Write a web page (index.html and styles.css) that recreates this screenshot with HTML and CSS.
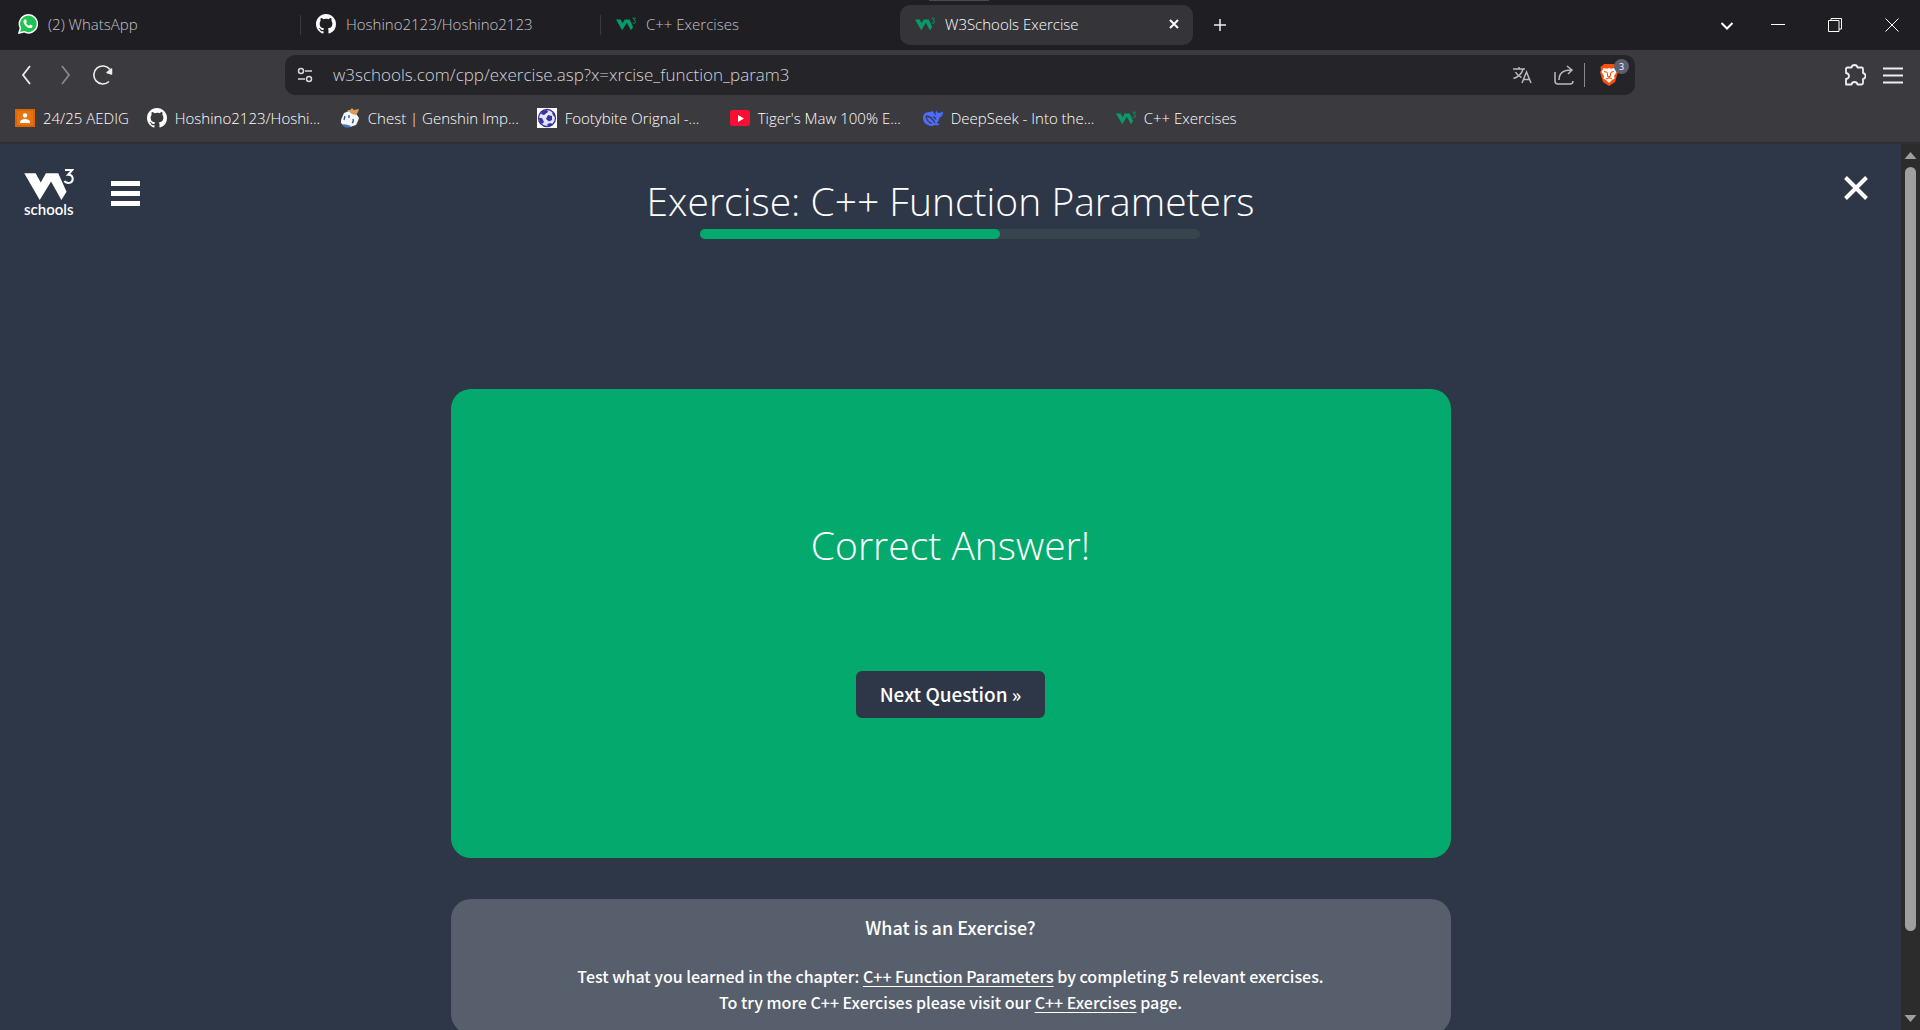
FILE: index.html
```html
<!DOCTYPE html>
<html lang="en">
<head>
<meta charset="utf-8">
<title>W3Schools Exercise</title>
<link rel="stylesheet" href="styles.css">
</head>
<body>
<svg class="defs" aria-hidden="true">
  <symbol id="github" viewBox="0 0 16 16"><path d="M8 0C3.58 0 0 3.58 0 8c0 3.54 2.29 6.53 5.47 7.59.4.07.55-.17.55-.38 0-.19-.01-.82-.01-1.49-2.01.37-2.53-.49-2.69-.94-.09-.23-.48-.94-.82-1.13-.28-.15-.68-.52-.01-.53.63-.01 1.08.58 1.23.82.72 1.21 1.87.87 2.33.66.07-.52.28-.87.51-1.07-1.78-.2-3.64-.89-3.64-3.95 0-.87.31-1.59.82-2.15-.08-.2-.36-1.02.08-2.12 0 0 .67-.21 2.2.82A7.4 7.4 0 0 1 8 3.86c.68 0 1.36.09 2 .27 1.53-1.04 2.2-.82 2.2-.82.44 1.1.16 1.92.08 2.12.51.56.82 1.27.82 2.15 0 3.07-1.87 3.75-3.65 3.95.29.25.54.73.54 1.48 0 1.07-.01 1.93-.01 2.2 0 .21.15.46.55.38A8 8 0 0 0 16 8c0-4.42-3.58-8-8-8z" fill="#fff"/></symbol>
  <symbol id="w3" viewBox="0 0 48 32"><path d="M0 5h11l5 9 5-9h12l8 18-5 8-10-18-11 18z" fill="currentColor"/><path d="M39.500 2h7l-4 4.500q4.500 0 4.500 4t-4 4q-3 0-4-2" fill="none" stroke="currentColor" stroke-width="2"/></symbol>
</svg>
<div class="window">
  <header class="browser">
    <div class="tabs">
      <div class="tab">
        <svg class="fav" viewBox="0 0 20 20"><path d="M1 19l1.400-5A9 9 0 1 1 6 17.700z" fill="#1fc351" stroke="#fff" stroke-width="1.500"/><path d="M6.500 5.500l1.400-.2 1 2.500-.8 1.100c.8 1.400 1.700 2.200 3.100 2.800l1.100-1.200 2.400 1.200c-.2 1.700-1.300 2.500-2.700 2.400-3-.5-6-3.500-6.500-6.200-.1-1 .3-1.900 1-2.400z" fill="#fff"/></svg>
        <span>(2) WhatsApp</span></div>
      <div class="tab split"><svg class="fav"><use href="#github"/></svg><span>Hoshino2123/Hoshino2123</span></div>
      <div class="tab split"><svg class="fav green"><use href="#w3"/></svg><span>C++ Exercises</span></div>
      <div class="tab active"><svg class="fav green"><use href="#w3"/></svg><span>W3Schools Exercise</span>
        <button class="tab-close" aria-label="Close tab"><svg viewBox="0 0 10 10"><path d="M1 1l8 8M9 1l-8 8" stroke="#fff" stroke-width="2"/></svg></button></div>
      <button class="new-tab" aria-label="New tab"><svg viewBox="0 0 14 14"><path d="M7 1v12M1 7h12" stroke="#eee" stroke-width="1.500"/></svg></button>
      <div class="win-buttons">
        <button class="search-tabs" aria-label="Search tabs"><svg viewBox="0 0 14 14"><path d="M1.500 5L7 10.500 12.500 5" fill="none" stroke="#fff" stroke-width="2"/></svg></button>
        <button aria-label="Minimize"><svg viewBox="0 0 14 14"><path d="M0 6.500h14" stroke="#fff"/></svg></button>
        <button aria-label="Restore"><svg viewBox="0 0 14 14"><path d="M.5 2.500h10.500v11H.5zM3 2.500v-2h10.500v10.500H11" fill="none" stroke="#fff"/></svg></button>
        <button aria-label="Close"><svg viewBox="0 0 14 14"><path d="M.5.500l13 13M13.500.500l-13 13" stroke="#fff"/></svg></button>
      </div>
    </div>
    <div class="toolbar">
      <div class="nav">
        <button aria-label="Back"><svg viewBox="0 0 20 20"><path d="M13 1L6 10l7 9" fill="none" stroke="#eee" stroke-width="1.800"/></svg></button>
        <button aria-label="Forward"><svg viewBox="0 0 20 20"><path d="M7 1l7 9-7 9" fill="none" stroke="#88878c" stroke-width="1.800"/></svg></button>
        <button aria-label="Reload"><svg viewBox="0 0 20 20"><path d="M16 16.500a9 9 0 1 1 1-12" fill="none" stroke="#eee" stroke-width="1.600"/><path d="M14 7.500l4.500-3.500v5z" fill="#eee" stroke="#eee" stroke-linejoin="round" stroke-width="1.500"/></svg></button>
      </div>
      <div class="address">
        <svg class="site" viewBox="0 0 16 16" fill="none" stroke="#d8d8dc" stroke-width="1.500"><circle cx="4" cy="4" r="2.500"/><path d="M8 4h7M1 12h7"/><circle cx="12" cy="12" r="2.500"/></svg>
        <input class="url" type="text" aria-label="Address" value="w3schools.com/cpp/exercise.asp?x=xrcise_function_param3">
        <button class="translate" aria-label="Translate"><svg viewBox="0 0 20 20" fill="none" stroke="#b9b9be" stroke-width="1.500"><path d="M1 4h12M7 2v2M11 4C10 8 6 12 1.500 13.500M3.500 7c1.500 3 4 4.500 6 5.500M10 18l4.500-11L19 18M11.500 14.500h6"/></svg></button>
        <button aria-label="Share"><svg viewBox="0 0 20 20" fill="none" stroke="#b9b9be" stroke-width="1.500"><path d="M1 7v9q0 3 3 3h12q3 0 3-3M5 15c0-6 4-10 12-10M13 1l5 4-4 4"/></svg></button>
        <button class="shield" aria-label="Brave Shields"><svg viewBox="0 0 20 24"><path d="M5 1h10l2 2 1.500.5L18 7l1 2-3 10-6 4-6-4L1 9l1-2-.5-3.500L3 3z" fill="#fb4f0c"/><path d="M4.500 5l3.500.7L10 5l2 .7 3.500-.7 2 4-2.500 4 .7 2.500L13 17l-3 3-3-3-2.700-1.500L5 13 2.500 9z" fill="#fff"/><path d="M5 8.500l3 .7M15 8.500l-3 .7M8.500 9.500v3.500l1.500 1 1.500-1V9.500M7 16l3-1.200 3 1.200" fill="none" stroke="#fb4f0c" stroke-width="1.100"/></svg><span class="badge">3</span></button>
      </div>
      <div class="tools">
        <button aria-label="Extensions"><svg viewBox="0 0 22 22"><path d="M3.500 3.500h4Q8 1 10.500 1t3 2.500h4q1.500 0 1.500 1.500v4q2.500.5 2.500 3T19 15v4q0 1.500-1.500 1.500h-4Q13 18 10.500 18T7.500 20.500H2V15q3-.5 3-3T2 9V5q0-1.500 1.500-1.500z" fill="none" stroke="#eee" stroke-width="1.800" stroke-linejoin="round"/></svg></button>
        <button aria-label="Menu"><svg viewBox="0 0 22 22"><path d="M1 4.500h20M1 11.500h20M1 18.500h20" stroke="#eee" stroke-width="1.800"/></svg></button>
      </div>
    </div>
    <nav class="bookmarks">
      <a href="#"><svg viewBox="0 0 20 20"><path d="M0 1h20v18H0z" fill="#d96604"/><path d="M2 3h16v14H2z" fill="#e67410"/><circle cx="10" cy="7.500" r="2.200" fill="#fff"/><path d="M5 15v-1.500q1-2.500 5-2.500t5 2.500V15z" fill="#fff"/></svg>24/25 AEDIG</a>
      <a class="long" href="#"><svg><use href="#github"/></svg>Hoshino2123/Hoshi...</a>
      <a class="long" href="#"><svg viewBox="0 0 20 20"><path d="M1 12l3-7 5-2 6 1 4 6-1 3-2 4-6 2-6-1-3-3z" fill="#f4f6fa"/><path d="M7 2l3 0 2-2 2 2 5-1-1 3-2 3-4-1z" fill="#d99a5a"/><path d="M3 16l5 1 3 1-3 2-4-1z" fill="#3f75b8"/><path d="M5 8l-1 4M9 7v3M13 11q1 3-1 4" stroke="#33507e" stroke-width="1.300" fill="none"/></svg>Chest | Genshin Imp...</a>
      <a class="long" href="#"><svg viewBox="0 0 20 20"><path d="M0 0h20v20H0z" fill="#fff"/><circle cx="10" cy="10" r="8.500" fill="#e4e4f8" stroke="#3533a0" stroke-width="1.300"/><path d="M11 7l4 1 0 4-3 1.500-3-2.500zM5 3l5-1 1 2-4 3-3-1zM2 10l3 0 2 4-2 2-2-2zM17 4l1.500 5-2-1-1.500-3zM10 16l4-1 2 2-4 2z" fill="#3533a0"/></svg>Footybite Orignal -...</a>
      <a class="long" href="#"><svg viewBox="0 0 20 20"><rect y="2" width="20" height="16" rx="3" fill="#fc0d34"/><path d="M8 7l6 3.500L8 14z" fill="#fff"/></svg>Tiger's Maw 100% E...</a>
      <a class="long" href="#"><svg viewBox="0 0 20 20"><path d="M0 10q0-6 6-6 2 0 4-1 0 2 3 4.500Q12 4 13.500 2.500 14 5 16 5q2-.5 4-1.500 0 5-3.500 6Q16 13 14 14.500q1 1.500 3 1.500-2 2-5 1-3 1.500-6 .5-6-2-6-7.500z" fill="#4d6bfe"/><path d="M3 8q1 6 6 7.500M3 8q5 0 9 7M10 9q2 0 3 2.500" stroke="#3b3a3f" fill="none" stroke-width="1.300"/></svg>DeepSeek - Into the...</a>
      <a href="#"><svg class="green"><use href="#w3"/></svg>C++ Exercises</a>
    </nav>
  </header>
  <div class="viewport">
    <main class="page">
      <div class="topbar">
        <div class="left">
          <a class="logo" href="#" aria-label="W3Schools home"><svg><use href="#w3"/></svg><span>schools</span></a>
          <button class="menu" aria-label="Menu"><i></i><i></i><i></i></button>
        </div>
        <div class="heading"><h1>Exercise: C++ Function Parameters</h1><div class="progress"><div class="bar" style="width:60%"></div></div></div>
        <button class="exit" aria-label="Close exercise"><svg viewBox="0 0 24 24"><path d="M1.500 1.500l21 21M22.500 1.500l-21 21" stroke="#fff" stroke-width="4"/></svg></button>
      </div>
      <section class="answer"><h2>Correct Answer!</h2><button class="next">Next Question »</button></section>
      <section class="info"><h3>What is an Exercise?</h3>
        <p>Test what you learned in the chapter: <a href="#">C++ Function Parameters</a> by completing 5 relevant exercises.<br>To try more C++ Exercises please visit our <a href="#">C++ Exercises</a> page.</p></section>
    </main>
    <div class="scroll"><svg viewBox="0 0 12 7"><path d="M6 0l6 7H0z"/></svg><div class="track"><div class="thumb"></div></div><svg viewBox="0 0 12 7"><path d="M0 0h12L6 7z"/></svg></div>
  </div>
</div>
</body>
</html>
```
FILE: styles.css
```css
* { box-sizing: border-box; }
body { margin: 0; font-family: "Open Sans", "Noto Sans", sans-serif; color: #fff; background: #2e3748; }
button { padding: 0; border: 0; background: none; color: inherit; font: inherit; display: flex; align-items: center; justify-content: center; }
a { color: inherit; }
svg { display: block; flex: none; }
.defs { position: absolute; width: 0; height: 0; }
.green { color: #069b69; }
.window { height: 100vh; display: flex; flex-direction: column; overflow: hidden; }

.browser { flex: none; background: #3b3a3f; border-bottom: 2px solid #302f34; font-weight: 300; }
.tabs { height: 50px; background: linear-gradient(#4b4b4b, #4b4b4b) 929px 0 / 60px 1px no-repeat #1f1e23; display: flex; align-items: center; font-size: 15px; color: #c4c4c8; }
.tab { width: 300px; height: 40px; padding: 0 14px 2px 18px; display: flex; align-items: center; gap: 10px; white-space: nowrap; }
.split { background: linear-gradient(#3a393e, #3a393e) 0 50% / 1px 20px no-repeat; padding-left: 16px; }
.fav { width: 20px; height: 20px; }
.active { width: 293px; background: #353439; border-radius: 10px; color: #fff; padding-left: 15px; }
.tab-close { margin-left: auto; }
.tab-close svg { width: 10px; height: 10px; }
.new-tab { width: 54px; height: 40px; }
.new-tab svg { width: 14px; height: 14px; }
.win-buttons { margin-left: auto; display: flex; }
.win-buttons button { width: 57px; height: 40px; }
.win-buttons .search-tabs { width: 45px; }
.win-buttons svg { width: 14px; height: 14px; }

.toolbar { display: flex; align-items: center; padding: 5px 16px 0; }
.nav { width: 269px; display: flex; gap: 16px; }
.nav svg { width: 22px; height: 20px; }
.address { width: 1350px; height: 40px; display: flex; align-items: center; background: #252429; border-radius: 10px; padding: 0 12px; gap: 10px; }
.site { width: 16px; height: 16px; }
.url { flex: 1; min-width: 0; padding: 0 0 2px 10px; border: 0; background: none; color: #d4d4d8; font: inherit; font-size: 17px; outline: 0; }
.address button svg { width: 20px; height: 20px; }
.translate { margin-right: 12px; }
.address .shield { position: relative; padding: 0 4px 0 14px; border-left: 1px solid #8a8990; }
.address .shield svg { width: 20px; height: 24px; }
.badge { position: absolute; top: -4px; right: -6px; width: 15px; height: 15px; border-radius: 50%; background: #5d5f70; font-size: 9px; line-height: 15px; font-weight: 400; }
.tools { margin-left: auto; display: flex; gap: 16px; }
.tools svg { width: 22px; height: 22px; }

.bookmarks { height: 47px; display: flex; align-items: center; padding: 0 15px 2px; gap: 18px; font-size: 15px; white-space: nowrap; }
.bookmarks a { display: flex; align-items: center; gap: 8px; text-decoration: none; }
.bookmarks .long { min-width: 175px; }
.bookmarks svg { width: 20px; height: 20px; }

.viewport { flex: 1; min-height: 0; display: flex; }
.page { flex: 1; min-width: 0; overflow: hidden; font-family: "Noto Sans CJK SC", sans-serif; text-align: center; font-weight: 500; }
.topbar { display: grid; grid-template-columns: 1fr auto 1fr; align-items: start; height: 245px; padding: 24px 24px 0; }
.left { display: flex; gap: 37px; }
.logo { text-decoration: none; text-align: left; font: 600 15px/16px Lato, sans-serif; }
.logo svg { width: 50px; height: 33px; }
.menu { flex-direction: column; gap: 5px; height: 50px; }
.menu i { width: 29px; height: 5px; background: #fff; }
.heading { padding-top: 7px; }
h1, h2 { margin: 0; font-family: "Open Sans", sans-serif; font-weight: 300; font-size: 39px; line-height: 52px; }
.progress { width: 500px; height: 10px; margin: 2px auto 0; border-radius: 5px; background: #38444e; }
.bar { height: 10px; border-radius: 5px; background: #04aa6d; }
.exit { justify-self: end; padding: 8px 9px 0 0; }
.exit svg { width: 24px; height: 24px; }
.answer { max-width: 1000px; height: 469px; margin: 0 auto; padding-top: 130px; border-radius: 20px; background: #04aa6d; }
.next { margin: 100px auto 0; padding-bottom: 2px; width: 189px; height: 47px; border-radius: 6px; background: #2e3748; font-size: 19px; }
.info { max-width: 1000px; height: 135px; margin: 41px auto 0; padding-top: 15px; border-radius: 20px; background: #585f6c; }
h3 { margin: 0; font-size: 18px; line-height: 27px; font-weight: 500; }
p { margin: 22px 0 0; font-size: 16px; line-height: 26px; }
p a { text-underline-offset: 3px; }

.scroll { width: 19px; background: #2c2c2c; display: flex; flex-direction: column; align-items: center; padding: 8px 0; gap: 8px; fill: #9f9f9f; }
.scroll svg { width: 13px; height: 7px; }
.track { flex: 1; }
.thumb { width: 11px; height: 89%; border-radius: 6px; background: #9f9f9f; }
.thumb { height: 91%; }
```
